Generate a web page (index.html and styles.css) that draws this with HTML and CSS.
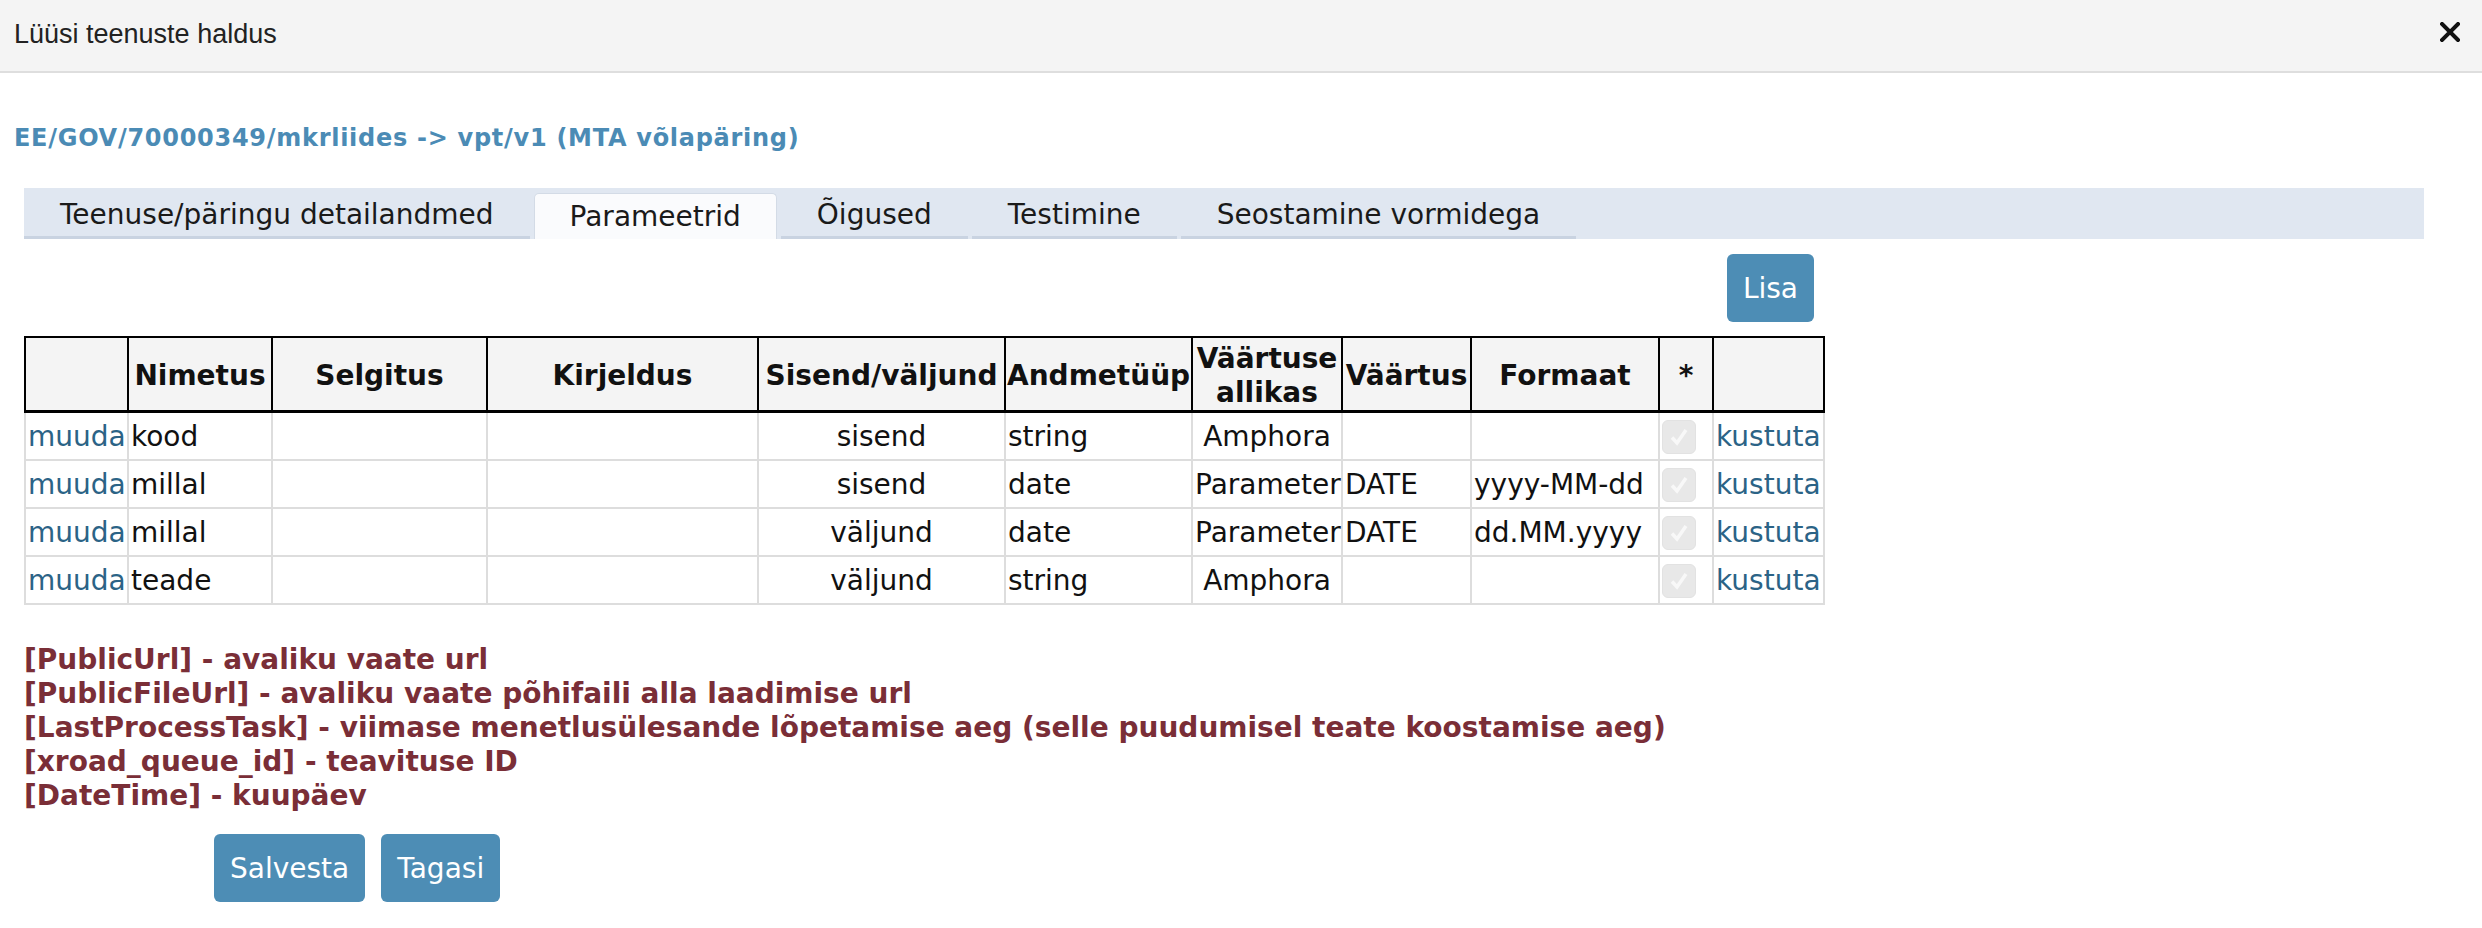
FILE: index.html
```html
<!DOCTYPE html>
<html lang="et">
<head>
<meta charset="utf-8">
<title>Lüüsi teenuste haldus</title>
<link rel="stylesheet" href="styles.css">
</head>
<body>
<div class="titlebar">
  <span class="title">Lüüsi teenuste haldus</span>
  <svg class="close" width="20" height="20" viewBox="0 0 20 20"><path d="M2 2 L18 18 M18 2 L2 18" stroke="#111" stroke-width="4" stroke-linecap="square"/></svg>
</div>

<h2 class="service">EE/GOV/70000349/mkrliides -&gt; vpt/v1 (MTA võlapäring)</h2>

<div class="tabs">
  <div class="tab">Teenuse/päringu detailandmed</div>
  <div class="tab active">Parameetrid</div>
  <div class="tab">Õigused</div>
  <div class="tab">Testimine</div>
  <div class="tab">Seostamine vormidega</div>
</div>

<div class="panel">
  <div class="toolbar"><button class="btn btn-add">Lisa</button></div>
  <table class="params">
    <colgroup>
      <col class="c1"><col class="c2"><col class="c3"><col class="c4"><col class="c5"><col class="c6"><col class="c7"><col class="c8"><col class="c9"><col class="c10"><col class="c11">
    </colgroup>
    <thead>
      <tr>
        <th></th>
        <th>Nimetus</th>
        <th>Selgitus</th>
        <th>Kirjeldus</th>
        <th>Sisend/väljund</th>
        <th>Andmetüüp</th>
        <th>Väärtuse<br>allikas</th>
        <th>Väärtus</th>
        <th>Formaat</th>
        <th>*</th>
        <th></th>
      </tr>
    </thead>
    <tbody>
      <tr>
        <td><a href="#">muuda</a></td><td>kood</td><td></td><td></td><td class="center">sisend</td><td>string</td><td class="center">Amphora</td><td></td><td></td>
        <td><span class="chk"><svg width="24" height="24" viewBox="0 0 24 24"><path d="M5 12.5 L10 18 L19 5" fill="none" stroke="#f8f8f8" stroke-width="3.5"/></svg></span></td>
        <td><a href="#">kustuta</a></td>
      </tr>
      <tr>
        <td><a href="#">muuda</a></td><td>millal</td><td></td><td></td><td class="center">sisend</td><td>date</td><td class="center">Parameter</td><td>DATE</td><td>yyyy-MM-dd</td>
        <td><span class="chk"><svg width="24" height="24" viewBox="0 0 24 24"><path d="M5 12.5 L10 18 L19 5" fill="none" stroke="#f8f8f8" stroke-width="3.5"/></svg></span></td>
        <td><a href="#">kustuta</a></td>
      </tr>
      <tr>
        <td><a href="#">muuda</a></td><td>millal</td><td></td><td></td><td class="center">väljund</td><td>date</td><td class="center">Parameter</td><td>DATE</td><td>dd.MM.yyyy</td>
        <td><span class="chk"><svg width="24" height="24" viewBox="0 0 24 24"><path d="M5 12.5 L10 18 L19 5" fill="none" stroke="#f8f8f8" stroke-width="3.5"/></svg></span></td>
        <td><a href="#">kustuta</a></td>
      </tr>
      <tr>
        <td><a href="#">muuda</a></td><td>teade</td><td></td><td></td><td class="center">väljund</td><td>string</td><td class="center">Amphora</td><td></td><td></td>
        <td><span class="chk"><svg width="24" height="24" viewBox="0 0 24 24"><path d="M5 12.5 L10 18 L19 5" fill="none" stroke="#f8f8f8" stroke-width="3.5"/></svg></span></td>
        <td><a href="#">kustuta</a></td>
      </tr>
    </tbody>
  </table>
</div>

<div class="notes">
  <div>[PublicUrl] - avaliku vaate url</div>
  <div>[PublicFileUrl] - avaliku vaate põhifaili alla laadimise url</div>
  <div>[LastProcessTask] - viimase menetlusülesande lõpetamise aeg (selle puudumisel teate koostamise aeg)</div>
  <div>[xroad_queue_id] - teavituse ID</div>
  <div>[DateTime] - kuupäev</div>
</div>

<div class="actions">
  <button class="btn">Salvesta</button>
  <button class="btn">Tagasi</button>
</div>
</body>
</html>
```
FILE: styles.css
```css
html, body {
  margin: 0;
  padding: 0;
  background: #ffffff;
}
body {
  font-family: "DejaVu Sans", Verdana, sans-serif;
  font-size: 28px;
  color: #111;
}

.titlebar {
  height: 71px;
  background: #f4f4f4;
  border-bottom: 2px solid #dedede;
  display: flex;
  align-items: center;
  justify-content: space-between;
  padding: 0 22px 0 14px;
}
.title {
  font-family: "Liberation Sans", Arial, sans-serif;
  font-size: 27px;
  color: #222;
  margin-top: -2px;
}
.close {
  display: block;
  margin-top: -8px;
}

.service {
  margin: 50px 0 0 14px;
  font-size: 24px;
  line-height: 30px;
  font-weight: bold;
  letter-spacing: 0.72px;
  color: #4b8bb5;
}

.tabs {
  margin: 35px 58px 0 24px;
  height: 51px;
  background: #e0e7f1;
  display: flex;
  align-items: flex-start;
  gap: 4px;
}
.tab {
  box-sizing: border-box;
  height: 51px;
  padding: 6px 36px 0;
  line-height: 42px;
  border-bottom: 3px solid #c9d3e1;
  color: #1a1a1a;
  white-space: nowrap;
}
.tab.active {
  margin-top: 5px;
  height: 46px;
  padding: 0 35px;
  line-height: 45px;
  background: #fafbfd;
  border: 1px solid #d3dbe6;
  border-bottom: none;
  border-radius: 5px 5px 0 0;
}

.panel {
  width: 1799px;
  margin-left: 24px;
}
.toolbar {
  display: flex;
  justify-content: flex-end;
  padding: 15px 9px 14px 0;
}
.btn {
  font-family: "DejaVu Sans", Verdana, sans-serif;
  font-size: 28px;
  height: 68px;
  padding: 0 16px;
  border: none;
  border-radius: 6px;
  background: #4d8db5;
  color: #ffffff;
}

.params {
  table-layout: fixed;
  border-collapse: collapse;
  width: 1799px;
}
.c1 { width: 103px; }
.c2 { width: 144px; }
.c3 { width: 215px; }
.c4 { width: 271px; }
.c5 { width: 247px; }
.c6 { width: 187px; }
.c7 { width: 150px; }
.c8 { width: 129px; }
.c9 { width: 188px; }
.c10 { width: 54px; }
.c11 { width: 111px; }

.params th {
  background: #f4f4f4;
  border: 2px solid #000;
  border-bottom-width: 3px;
  font-weight: bold;
  line-height: 34px;
  height: 65px;
  padding: 4px 1px 0;
  text-align: center;
  vertical-align: middle;
  white-space: nowrap;
  overflow: visible;
}
.params td {
  border: 2px solid #dddddd;
  height: 44px;
  padding: 2px 2px 0;
  line-height: 34px;
  text-align: left;
  vertical-align: middle;
  white-space: nowrap;
}
.params td.center {
  text-align: center;
}
.params a {
  color: #2b6386;
  text-decoration: none;
}
.chk {
  display: flex;
  align-items: center;
  justify-content: center;
  width: 34px;
  height: 34px;
  border-radius: 6px;
  background: #e8e8e8;
  box-sizing: border-box;
  border: 1px solid #e2e2e2;
}
.chk svg { display: block; }

.notes {
  margin: 38px 0 0 24px;
  font-weight: bold;
  line-height: 34px;
  color: #7a2e37;
}

.actions {
  margin: 21px 0 0 214px;
  display: flex;
  gap: 16px;
}
```
